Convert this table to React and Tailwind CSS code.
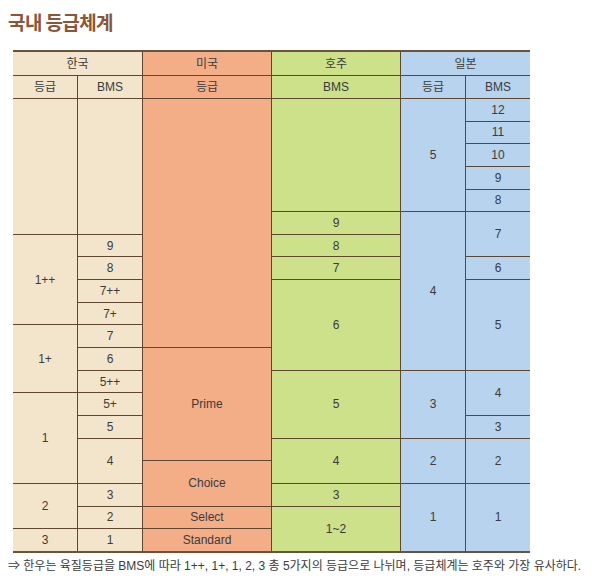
import React from "react";

const K = "bg-[#f3e5cc]";
const U = "bg-[#f3ae88]";
const A = "bg-[#cde08a]";
const J = "bg-[#b7d3ee]";

function C({ className, children }) {
  return (
    <div className={"flex items-center justify-center " + className}>
      {children}
    </div>
  );
}

export default function App() {
  return (
    <div
      className="w-[600px] h-[585px] bg-white text-[#3b3b3b]"
      style={{ fontFamily: '"Liberation Sans", "Noto Sans CJK KR", sans-serif' }}
    >
      <div className="pt-[9px] pl-[8px] text-[19px] font-semibold leading-[26px] text-[#8b5536] tracking-[-0.6px]" style={{ fontFamily: '"Noto Sans CJK KR", sans-serif' }}>
        국내 등급체계
      </div>
      <div className="ml-[13px] mt-[15px] w-[517px] grid grid-cols-[64px_64px_128px_128px_64px_64px] grid-rows-[23px_22px_repeat(20,21.65px)] gap-px bg-[#5e4631] border-t-2 border-b-2 border-[#6b523a] text-[12px] leading-none">
        {/* header */}
        <C className={"col-start-1 col-span-2 row-start-1 " + K}>한국</C>
        <C className={"col-start-3 row-start-1 " + U}>미국</C>
        <C className={"col-start-4 row-start-1 " + A}>호주</C>
        <C className={"col-start-5 col-span-2 row-start-1 " + J}>일본</C>
        <C className={"col-start-1 row-start-2 " + K}>등급</C>
        <C className={"col-start-2 row-start-2 " + K}>BMS</C>
        <C className={"col-start-3 row-start-2 " + U}>등급</C>
        <C className={"col-start-4 row-start-2 " + A}>BMS</C>
        <C className={"col-start-5 row-start-2 " + J}>등급</C>
        <C className={"col-start-6 row-start-2 " + J}>BMS</C>

        {/* Korea grade */}
        <C className={"col-start-1 row-start-3 row-span-6 " + K}></C>
        <C className={"col-start-1 row-start-9 row-span-4 " + K}>1++</C>
        <C className={"col-start-1 row-start-13 row-span-3 " + K}>1+</C>
        <C className={"col-start-1 row-start-16 row-span-4 " + K}>1</C>
        <C className={"col-start-1 row-start-20 row-span-2 " + K}>2</C>
        <C className={"col-start-1 row-start-22 " + K}>3</C>

        {/* Korea BMS */}
        <C className={"col-start-2 row-start-3 row-span-6 " + K}></C>
        <C className={"col-start-2 row-start-9 " + K}>9</C>
        <C className={"col-start-2 row-start-10 " + K}>8</C>
        <C className={"col-start-2 row-start-11 " + K}>7++</C>
        <C className={"col-start-2 row-start-12 " + K}>7+</C>
        <C className={"col-start-2 row-start-13 " + K}>7</C>
        <C className={"col-start-2 row-start-14 " + K}>6</C>
        <C className={"col-start-2 row-start-15 " + K}>5++</C>
        <C className={"col-start-2 row-start-16 " + K}>5+</C>
        <C className={"col-start-2 row-start-17 " + K}>5</C>
        <C className={"col-start-2 row-start-18 row-span-2 " + K}>4</C>
        <C className={"col-start-2 row-start-20 " + K}>3</C>
        <C className={"col-start-2 row-start-21 " + K}>2</C>
        <C className={"col-start-2 row-start-22 " + K}>1</C>

        {/* US grade */}
        <C className={"col-start-3 row-start-3 row-span-11 " + U}></C>
        <C className={"col-start-3 row-start-14 row-span-5 " + U}>Prime</C>
        <C className={"col-start-3 row-start-19 row-span-2 " + U}>Choice</C>
        <C className={"col-start-3 row-start-21 " + U}>Select</C>
        <C className={"col-start-3 row-start-22 " + U}>Standard</C>

        {/* Australia BMS */}
        <C className={"col-start-4 row-start-3 row-span-5 " + A}></C>
        <C className={"col-start-4 row-start-8 " + A}>9</C>
        <C className={"col-start-4 row-start-9 " + A}>8</C>
        <C className={"col-start-4 row-start-10 " + A}>7</C>
        <C className={"col-start-4 row-start-11 row-span-4 " + A}>6</C>
        <C className={"col-start-4 row-start-15 row-span-3 " + A}>5</C>
        <C className={"col-start-4 row-start-18 row-span-2 " + A}>4</C>
        <C className={"col-start-4 row-start-20 " + A}>3</C>
        <C className={"col-start-4 row-start-21 row-span-2 " + A}>1~2</C>

        {/* Japan grade */}
        <C className={"col-start-5 row-start-3 row-span-5 " + J}>5</C>
        <C className={"col-start-5 row-start-8 row-span-7 " + J}>4</C>
        <C className={"col-start-5 row-start-15 row-span-3 " + J}>3</C>
        <C className={"col-start-5 row-start-18 row-span-2 " + J}>2</C>
        <C className={"col-start-5 row-start-20 row-span-3 " + J}>1</C>

        {/* Japan BMS */}
        <C className={"col-start-6 row-start-3 " + J}>12</C>
        <C className={"col-start-6 row-start-4 " + J}>11</C>
        <C className={"col-start-6 row-start-5 " + J}>10</C>
        <C className={"col-start-6 row-start-6 " + J}>9</C>
        <C className={"col-start-6 row-start-7 " + J}>8</C>
        <C className={"col-start-6 row-start-8 row-span-2 " + J}>7</C>
        <C className={"col-start-6 row-start-10 " + J}>6</C>
        <C className={"col-start-6 row-start-11 row-span-4 " + J}>5</C>
        <C className={"col-start-6 row-start-15 row-span-2 " + J}>4</C>
        <C className={"col-start-6 row-start-17 " + J}>3</C>
        <C className={"col-start-6 row-start-18 row-span-2 " + J}>2</C>
        <C className={"col-start-6 row-start-20 row-span-3 " + J}>1</C>
      </div>
      <div className="pl-[8px] mt-[5px] text-[12px] leading-[16px] text-[#3b3b3b] whitespace-nowrap">
        ⇒ 한우는 육질등급을 BMS에 따라 1++, 1+, 1, 2, 3 총 5가지의 등급으로 나뉘며, 등급체계는 호주와 가장 유사하다.
      </div>
    </div>
  );
}
